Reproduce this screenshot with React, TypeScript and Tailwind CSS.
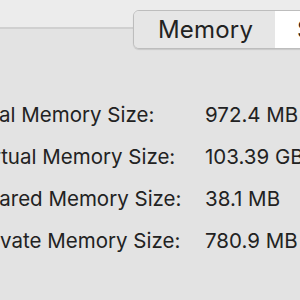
import React from "react";

const rows = [
  { label: "Real Memory Size:", value: "972.4 MB" },
  { label: "Virtual Memory Size:", value: "103.39 GB" },
  { label: "Shared Memory Size:", value: "38.1 MB" },
  { label: "Private Memory Size:", value: "780.9 MB" },
];

export default function App() {
  return (
    <div
      className="w-[300px] h-[300px] overflow-hidden bg-[#e3e3e3] text-[#222]"
      style={{ fontFamily: "Inter, 'Liberation Sans', sans-serif" }}
    >
      <div className="relative h-[31px]">
        <div className="h-[29px] bg-[#ececec] border-b-2 border-[#d0d0d0]" />
        <div className="absolute left-[133px] top-[10px] w-[200px] flex h-[39px] rounded-[6px] border border-[#bdbdbd] overflow-hidden shadow-[0_1px_1px_rgba(0,0,0,0.12)]">
          <div className="w-[141px] shrink-0 flex items-center justify-center bg-[#e6e6e6] text-[24px] tracking-[0.2px] pl-[2px]">
            Memory
          </div>
          <div className="flex-1 flex items-center bg-white text-[24px] overflow-hidden">
            <span className="ml-[22px] shrink-0">Statistics</span>
          </div>
        </div>
      </div>
      <div className="pt-[63px] ml-[-26px] flex flex-col">
        {rows.map((r) => (
          <div key={r.label} className="h-[42px] flex items-center text-[20.5px] whitespace-nowrap">
            <div className="w-[231px] shrink-0">{r.label}</div>
            <div className="shrink-0">{r.value}</div>
          </div>
        ))}
      </div>
    </div>
  );
}
